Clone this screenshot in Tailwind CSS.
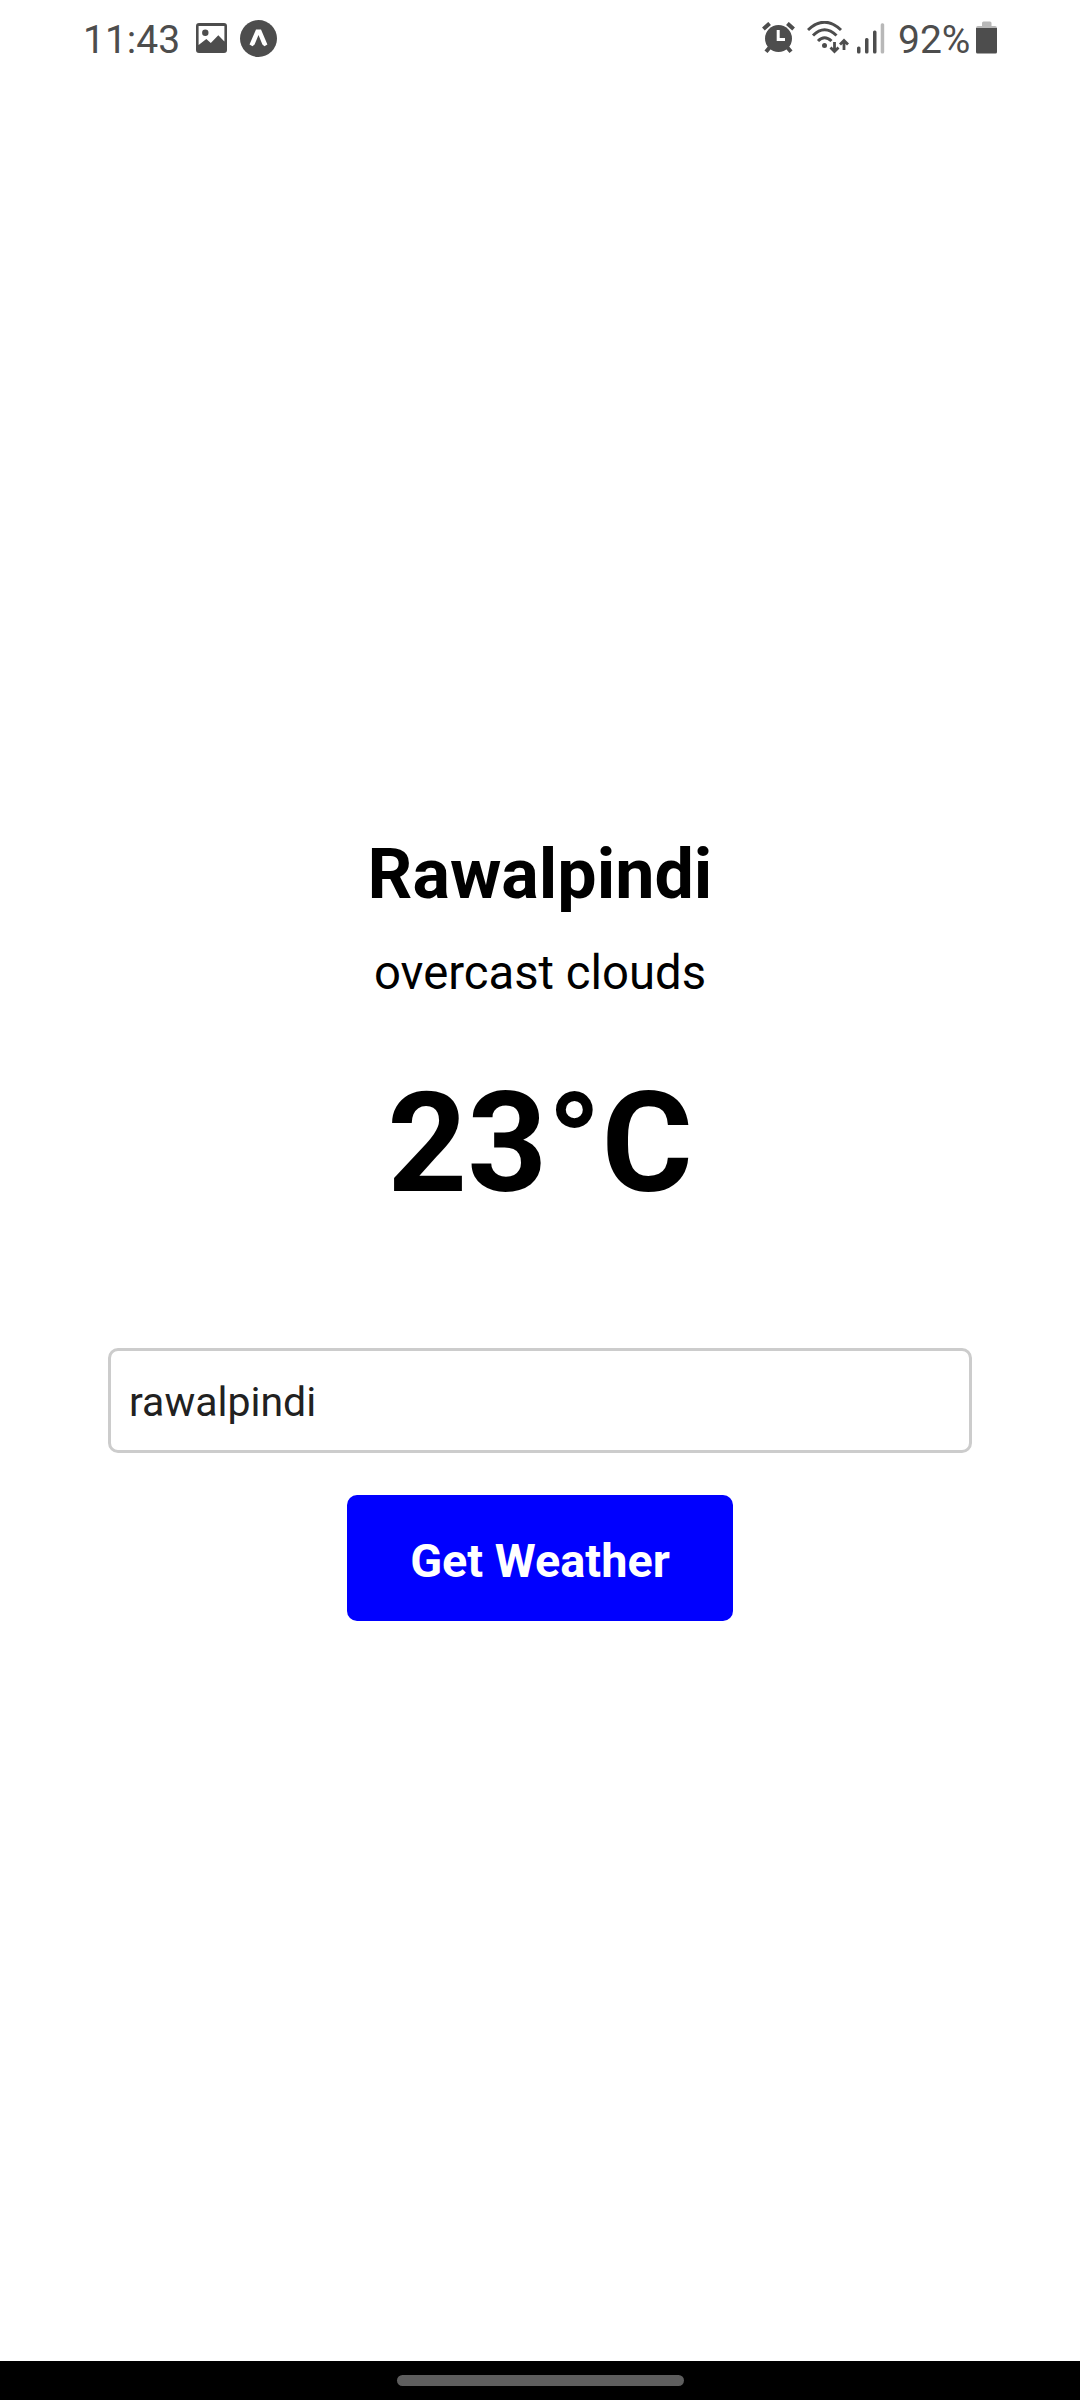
<!DOCTYPE html>
<html lang="en">
<head>
<meta charset="utf-8">
<title>Weather</title>
<script src="https://cdn.jsdelivr.net/npm/@tailwindcss/browser@4"></script>
</head>
<body class="bg-white">
<div class="flex h-[2400px] w-[1080px] flex-col overflow-hidden bg-white font-[Roboto,sans-serif] text-black">
  <header class="flex h-20 shrink-0 items-start justify-between pl-[83px] pr-[83px] text-[#4d4d4d]">
    <div class="flex items-start">
      <span class="mt-4 w-[113px] whitespace-nowrap text-[39px] leading-[48px]">11:43</span>
      <svg class="mt-[23px] h-[30px] w-[31px]" viewBox="0 0 31 30" fill="currentColor"><path fill-rule="evenodd" d="M3 0H28Q31 0 31 3V27Q31 30 28 30H3Q0 30 0 27V3Q0 0 3 0ZM2.6 3V22L10.3 16L14.8 20L22.3 12.3L28.4 18.4V3ZM9.3 6.5A3.2 3.2 0 1 1 9.3 12.9A3.2 3.2 0 1 1 9.3 6.5Z"/></svg>
      <svg class="ml-[13px] mt-5 h-[37px] w-[37px]" viewBox="0 0 37 37"><circle cx="18.5" cy="18.5" r="18.5" fill="currentColor"/><path d="M16 9.6H21L27.4 24.4L24.5 26.2L22.4 24.4L18.5 15L14.6 24.4L12.5 26.2L9.5 24.4Z" fill="#fff"/></svg>
    </div>
    <div class="flex items-start">
      <svg class="mt-[22px] h-8 w-[33px]" viewBox="0 0 33 32"><g stroke="currentColor" stroke-width="4" fill="none"><path d="M1.4 7L7.6 1.4M25.4 1.4L31.6 7"/><path d="M8 25L4 29.8M25 25L29 29.8"/></g><circle cx="16.5" cy="16.5" r="13.5" fill="currentColor"/><path d="M16.2 8V17.5H23" fill="none" stroke="#fff" stroke-width="3"/></svg>
      <svg class="ml-3 mt-[21px] h-[33px] w-[42px]" viewBox="0 0 42 33" fill="none" stroke="currentColor" stroke-width="3"><path d="M1 9Q17.500-6.500 34 9M6 14.500Q17.500 3 29.500 14.500M11 20Q17.500 13.500 24.500 20"/><circle cx="17.500" cy="24.500" r="2.500" fill="currentColor" stroke="none"/><path d="M27.500 21V30M23.500 26.500L27.500 30.500L31.500 26.500M37 29V20M33 23.500L37 19.500L41 23.500" stroke-width="2.800"/></svg>
      <svg class="ml-2 mt-[23px] h-[31px] w-7" viewBox="0 0 28 31" fill="currentColor"><rect x="0" y="23.500" width="3.500" height="7" rx="1.500"/><rect x="8" y="15" width="3.500" height="15.500" rx="1.500"/><rect x="16" y="7.500" width="3.500" height="23" rx="1.500"/><rect x="23.700" y="0.300" width="3.500" height="30.200" rx="1.500" fill="#b8b8b8"/></svg>
      <span class="ml-[13px] mt-4 w-[78px] whitespace-nowrap text-[39px] leading-[48px]">92%</span>
      <svg class="mt-[21px] h-[33px] w-[21px]" viewBox="0 0 21 33"><path d="M6 2Q6 .5 7.500 .5H14Q15.500 .5 15.500 2V5H19Q21 5 21 7H0Q0 5 2 5H6Z" fill="#b8b8b8"/><path d="M0 7H21V31Q21 32.500 19.500 32.500H1.500Q0 32.500 0 31Z" fill="currentColor"/></svg>
    </div>
  </header>
  <main class="flex flex-1 flex-col items-center pt-[753px]">
    <h1 class="text-[70px] leading-[82px] font-bold">Rawalpindi</h1>
    <p class="mt-[30px] text-[47.250px] leading-[56px]">overcast clouds</p>
    <p class="mt-[60px] text-[139.500px] leading-[165px] font-bold">23°C</p>
    <input class="mt-[122px] h-[105px] w-[864px] rounded-[10px] border-[3px] border-[#ccc] px-[18px] pt-[2px] text-[41px] text-[#212121] outline-none" value="rawalpindi" aria-label="City">
    <button class="mt-[42px] h-[126px] w-[386px] rounded-[10px] bg-[#00f] pt-[6px] text-[46.800px] font-bold text-white">Get Weather</button>
  </main>
  <footer class="flex h-[39px] shrink-0 justify-center bg-black pt-[14px]">
    <div class="h-[11px] w-[287px] rounded-full bg-[#5e5e5e]"></div>
  </footer>
</div>
</body>
</html>
